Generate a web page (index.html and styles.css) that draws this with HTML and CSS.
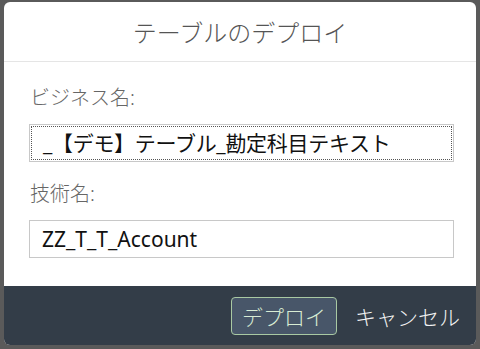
FILE: index.html
```html
<!DOCTYPE html>
<html lang="ja">
<head>
    <meta charset="UTF-8">
    <meta name="viewport" content="width=device-width, initial-scale=1.0">
    <title>テーブルのデプロイ</title>
    <link rel="stylesheet" href="styles.css">
</head>
<body>
    <div class="dialog">
        <div class="dialog-header">
            <h2>テーブルのデプロイ</h2>
        </div>

        <div class="dialog-body">
            <div class="field">
                <label for="businessName">ビジネス名:</label>
                <div class="input focused" id="businessName">_【デモ】テーブル_勘定科目テキスト</div>
            </div>

            <div class="field">
                <label for="technicalName">技術名:</label>
                <div class="input" id="technicalName">ZZ_T_T_Account</div>
            </div>
        </div>

        <div class="dialog-footer">
            <button class="btn btn-primary">デプロイ</button>
            <button class="btn btn-link">キャンセル</button>
        </div>
    </div>
</body>
</html>
```

FILE: styles.css
```css
body {
    margin: 0;
    background: #5a5a5a;
    font-family: "Noto Sans", "Noto Sans CJK JP", sans-serif;
}

.dialog {
    margin: 2px 4px 0 4px;
    width: 472px;
    height: 343px;
    background: #fff;
    border-radius: 6px;
    overflow: hidden;
    display: flex;
    flex-direction: column;
}

.dialog-header {
    height: 59px;
    border-bottom: 1px solid #e5e5e5;
    display: flex;
    align-items: center;
    justify-content: center;
}

.dialog-header h2 {
    margin: 0;
    font-size: 24px;
    font-weight: 300;
    color: #555;
}

.dialog-body {
    flex: 1;
    padding: 22px 22px 0 25px;
}

.field {
    margin-bottom: 18px;
}

.field label {
    display: block;
    margin: 0 0 12px 1px;
    font-size: 20px;
    line-height: 28px;
    font-weight: 300;
    color: #666;
}

.input {
    height: 36px;
    border: 1px solid #c8c8c8;
    padding: 0 12px;
    font-size: 21px;
    line-height: 36px;
    color: #111;
    white-space: nowrap;
    overflow: hidden;
}

.input.focused {
    outline: 1px dotted #555;
    outline-offset: -3px;
    padding-left: 13px;
    letter-spacing: -0.3px;
}

.dialog-footer {
    height: 59px;
    background: #333d48;
    display: flex;
    align-items: center;
    justify-content: flex-end;
    gap: 14px;
    padding-right: 12px;
}

.btn {
    font-family: inherit;
    font-size: 21px;
    font-weight: 300;
    cursor: pointer;
}

.btn-primary {
    height: 38px;
    padding: 0 10px;
    background: #485669;
    color: #d8ecd4;
    border: 1px solid #a9c9a3;
    border-radius: 4px;
}

.btn-link {
    background: none;
    border: none;
    color: #f2f2f2;
    padding: 0 4px;
}
```
